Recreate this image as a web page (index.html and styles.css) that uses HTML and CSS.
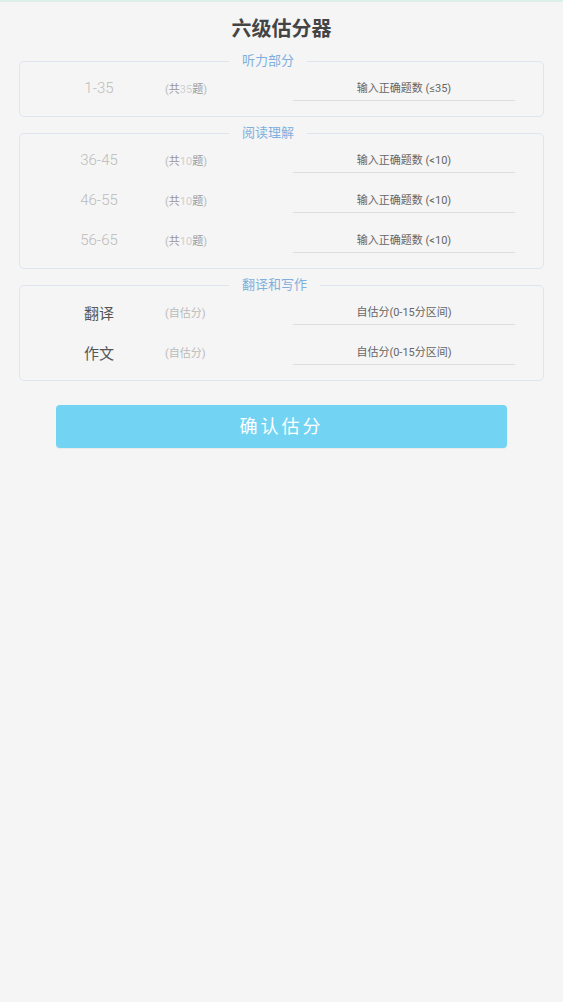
FILE: index.html
```html
<!DOCTYPE html>
<html>
<head>
  <meta charset="utf-8">
  <title>六级估分器</title>
  <link rel="stylesheet" href="styles.css">
</head>
<body>
  <h1 class="title">六级估分器</h1>

  <fieldset class="section">
    <legend class="section-title">听力部分</legend>
    <div class="row">
      <span class="range">1-35</span>
      <span class="note">(<em>共</em><i>35</i><em>题</em>)</span>
      <input type="text" class="score" placeholder="输入正确题数 (≤35)">
    </div>
  </fieldset>

  <fieldset class="section">
    <legend class="section-title">阅读理解</legend>
    <div class="row">
      <span class="range">36-45</span>
      <span class="note">(<em>共</em><i>10</i><em>题</em>)</span>
      <input type="text" class="score" placeholder="输入正确题数 (<10)">
    </div>
    <div class="row">
      <span class="range">46-55</span>
      <span class="note">(<em>共</em><i>10</i><em>题</em>)</span>
      <input type="text" class="score" placeholder="输入正确题数 (<10)">
    </div>
    <div class="row">
      <span class="range">56-65</span>
      <span class="note">(<em>共</em><i>10</i><em>题</em>)</span>
      <input type="text" class="score" placeholder="输入正确题数 (<10)">
    </div>
  </fieldset>

  <fieldset class="section">
    <legend class="section-title">翻译和写作</legend>
    <div class="row">
      <span class="range range-dark">翻译</span>
      <span class="note">(自估分)</span>
      <input type="text" class="score" placeholder="自估分(0-15分区间)">
    </div>
    <div class="row">
      <span class="range range-dark">作文</span>
      <span class="note">(自估分)</span>
      <input type="text" class="score" placeholder="自估分(0-15分区间)">
    </div>
  </fieldset>

  <div class="submit">确认估分</div>
</body>
</html>
```

FILE: styles.css
```css
body {
  margin: 0;
  min-height: 1000px;
  background-color: #f5f5f5;
  border-top: 2px solid #dcefea;
  font-family: Roboto, "Noto Sans CJK SC", sans-serif;
}
.title {
  margin: 0;
  padding-top: 14px;
  font-size: 20px;
  line-height: 26px;
  font-weight: bold;
  text-align: center;
  color: #444;
}
.section {
  margin: 12px 19px 0;
  padding: 0 0 8px;
  border: 1px solid #dfe5ee;
  border-radius: 5px;
}
.section + .section {
  margin-top: 9px;
}
.section-title {
  margin: 0 0 0 209px;
  padding: 0 13px;
  font-size: 13px;
  line-height: 14px;
  color: #80afde;
}
.row {
  display: grid;
  grid-template-columns: 78px 1fr 222px;
  column-gap: 27px;
  align-items: center;
  height: 40px;
  padding: 0 28px 0 40px;
}
.range {
  font-size: 15px;
  font-weight: 300;
  text-align: center;
  color: #bbb;
}
.range-dark {
  color: #555;
  font-weight: 400;
}
.note {
  font-size: 11px;
  color: #bbb;
}
.note em {
  font-style: normal;
  color: #999;
}
.note i {
  font-style: normal;
  color: #d0d0d0;
}
.score {
  box-sizing: border-box;
  width: 100%;
  height: 24px;
  margin-top: 1px;
  padding: 0;
  border: none;
  border-bottom: 1px solid #ddd;
  background: transparent;
  font-family: Roboto, "Noto Sans CJK SC", sans-serif;
  font-size: 11px;
  text-align: center;
  color: #555;
  outline: none;
}
.score::placeholder {
  color: #666;
}
.submit {
  margin: 24px 56px 0;
  height: 43px;
  line-height: 43px;
  background-color: #72d4f2;
  border-radius: 4px;
  box-shadow: 0 1px 1px rgba(0, 0, 0, 0.05);
  font-size: 18px;
  letter-spacing: 3px;
  text-align: center;
  color: #fff;
  cursor: pointer;
}
```
